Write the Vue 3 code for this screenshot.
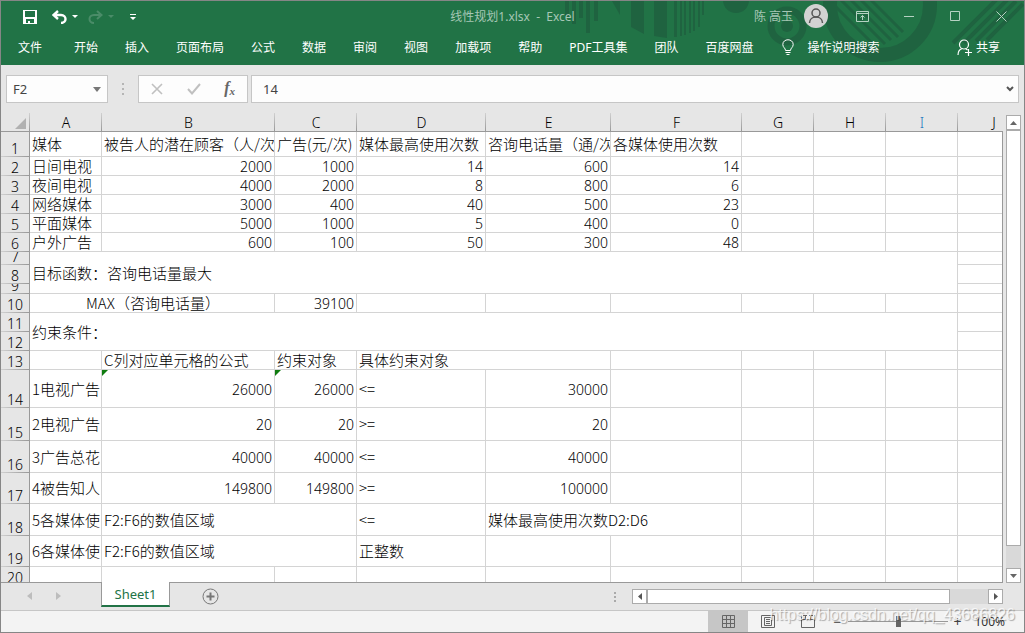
<script setup>
import { ref } from 'vue'

const menus = ['开始', '插入', '页面布局', '公式', '数据', '审阅', '视图', '加载项', '帮助', 'PDF工具集', '团队', '百度网盘']
const columns = [
  ['A', 72], ['B', 173], ['C', 82], ['D', 129], ['E', 125],
  ['F', 131], ['G', 72], ['H', 72], ['I', 72], ['J', 72],
]
const nameBox = ref('F2')
const formula = ref('14')
const zoom = ref(50)

const t = (text, span = 1, rows = 1, align = '') => ({ text, span, rows, align })
const n = (text, flag = false) => ({ text, span: 1, rows: 1, align: 'num', flag })
const blank = (count) => Array.from({ length: count }, () => t(''))

const rows = [
  { h: 25, cells: [t('媒体'), t('被告人的潜在顾客（人/次）'), t('广告(元/次)'), t('媒体最高使用次数'), t('咨询电话量（通/次）'), t('各媒体使用次数'), ...blank(4)] },
  { h: 19, cells: [t('日间电视'), n('2000'), n('1000'), n('14'), n('600'), n('14'), ...blank(4)] },
  { h: 19, cells: [t('夜间电视'), n('4000'), n('2000'), n('8'), n('800'), n('6'), ...blank(4)] },
  { h: 19, cells: [t('网络媒体'), n('3000'), n('400'), n('40'), n('500'), n('23'), ...blank(4)] },
  { h: 19, cells: [t('平面媒体'), n('5000'), n('1000'), n('5'), n('400'), n('0'), ...blank(4)] },
  { h: 19, cells: [t('户外广告'), n('600'), n('100'), n('50'), n('300'), n('48'), ...blank(4)] },
  { h: 13, cells: [t('目标函数：咨询电话量最大', 9, 3), ...blank(1)] },
  { h: 19, cells: blank(1) },
  { h: 10, cells: blank(1) },
  { h: 19, cells: [t('MAX（咨询电话量）', 2, 1, 'mid'), n('39100'), ...blank(7)] },
  { h: 19, cells: [t('约束条件：', 9, 2), ...blank(1)] },
  { h: 19, cells: blank(1) },
  { h: 19, cells: [t(''), t('C列对应单元格的公式'), t('约束对象'), t('具体约束对象', 2), ...blank(5)] },
  { h: 38, cells: [t('1电视广告'), n('26000', true), n('26000', true), t('<='), n('30000'), ...blank(5)] },
  { h: 33, cells: [t('2电视广告'), n('20'), n('20'), t('>='), n('20'), ...blank(5)] },
  { h: 32, cells: [t('3广告总花'), n('40000'), n('40000'), t('<='), n('40000'), ...blank(5)] },
  { h: 31, cells: [t('4被告知人'), n('149800'), n('149800'), t('>='), n('100000'), ...blank(5)] },
  { h: 32, cells: [t('5各媒体使'), t('F2:F6的数值区域', 2), t('<='), t('媒体最高使用次数D2:D6', 2), ...blank(4)] },
  { h: 31, cells: [t('6各媒体使'), t('F2:F6的数值区域', 2), t('正整数'), ...blank(6)] },
  { h: 19, cells: blank(10) },
]

function cellHeight(index, count) {
  return rows.slice(index, index + count).reduce((sum, row) => sum + row.h, 0) - 1
}
</script>

<template>
  <div class="window">
    <header class="ribbon">
      <svg class="art" width="460" height="64" viewBox="565 1 460 64" aria-hidden="true">
        <g fill="#1f6340">
          <path d="M566 1h4v16h-4zM573 1h4v23h-4zM580 1h4v17h-4zM587 1h4v32h-4zM595 1h4v20h-4z" />
          <path d="M613 1h8v14zM632 1h13v33l-13-7zM655 1h13v37l-13-2zM675 1h3v36h-3zM681 1h2v35h-2zM685 1h2v34h-2zM690 1h2v32h-2zM694 1h2v30h-2zM699 1h2v26h-2zM703 1h2v14h-2z" />
          <circle cx="737" cy="0" r="13" />
          <circle cx="788" cy="26" r="6" />
        </g>
        <g fill="none" stroke="#1f6340">
          <circle cx="788" cy="26" r="16" stroke-width="7" />
          <circle cx="881" cy="5" r="50" stroke-width="14" />
          <path d="M833 3l44 44M842 0l44 44M852 0l40 40M862 0l37 37M872 0l32 32" stroke-width="3" />
          <path d="M954 43l44-44M965 43l44-44M977 41l40-40M988 40l36-36" stroke-width="4" />
        </g>
      </svg>
      <div class="titlebar">
        <div class="quick">
          <button aria-label="保存">
            <svg width="14" height="14" viewBox="0 0 14 14"><path d="M0 0h14v14H0zM2 1v6h10V1zM3 9v4h2v-2h2v2h4V9z" fill="#fff" fill-rule="evenodd" /></svg>
          </button>
          <button class="undo" aria-label="撤消">
            <svg width="26" height="14" viewBox="0 0 26 14"><path d="M6 1L1.500 5L6 9M2 5h7c6 0 6 8 0 8" fill="none" stroke="#fff" stroke-width="2.400" /><path d="M20 5h6l-3 3z" fill="#fff" /></svg>
          </button>
          <button class="redo" aria-label="恢复">
            <svg width="26" height="14" viewBox="0 0 26 14"><path d="M9 1l4.500 4L9 9M13 5H6c-6 0-6 8 0 8" fill="none" stroke="#4a8c68" stroke-width="2" /><path d="M20 5h6l-3 3z" fill="#4a8c68" /></svg>
          </button>
          <button class="more" aria-label="自定义快速访问工具栏">
            <svg width="6" height="8" viewBox="0 0 6 8"><path d="M0 1h6v1H0zM0 4h6L3 7z" fill="#fff" /></svg>
          </button>
        </div>
        <div class="title">线性规划1.xlsx&nbsp; -&nbsp; Excel</div>
        <div class="account">
          <span class="user">陈 高玉</span>
          <svg class="avatar" width="24" height="24" viewBox="0 0 24 24"><circle cx="12" cy="12" r="12" fill="#d2d2d2" /><g fill="none" stroke="#555" stroke-width="1.500"><circle cx="12" cy="9" r="4" /><path d="M5.500 19c0-8 13-8 13 0" /></g></svg>
          <button class="win" aria-label="功能区显示选项"><svg width="13" height="11" viewBox="0 0 13 11"><path d="M.5.5h12v10H.5zM.5 2.500h12M6.500 9V4.500M4.500 6.500l2-2 2 2" fill="none" stroke="#b5d2c2" /></svg></button>
          <button class="win" aria-label="最小化"><svg width="11" height="11" viewBox="0 0 11 11"><path d="M0 5.500h10" stroke="#b5d2c2" /></svg></button>
          <button class="win" aria-label="最大化"><svg width="11" height="11" viewBox="0 0 11 11"><path d="M.5.5h9v9h-9z" fill="none" stroke="#b5d2c2" /></svg></button>
          <button class="win" aria-label="关闭"><svg width="11" height="11" viewBox="0 0 11 11"><path d="M.5.5l10 10M10.500.5l-10 10" stroke="#b5d2c2" /></svg></button>
        </div>
      </div>
      <nav class="menu">
        <button class="file">文件</button>
        <button v-for="m in menus" :key="m">{{ m }}</button>
        <button class="tell">
          <svg width="12" height="17" viewBox="0 0 12 17"><path d="M3.500 11.500C3.500 9 .8 8.500.8 5.500c0-6.300 10.400-6.300 10.400 0 0 3-2.700 3.500-2.700 6zM3.500 13.500h5M4.500 15.500h3" fill="none" stroke="#fff" /></svg>
          操作说明搜索
        </button>
        <button class="share">
          <svg width="16" height="17" viewBox="0 0 16 17"><g fill="none" stroke="#fff" stroke-width="1.200"><circle cx="7" cy="5.500" r="4.500" /><path d="M1 16c0-4 2-6 4.500-6.500M8.500 9.500l2 1.500M8 13.500h7M11.500 10v7" /></g></svg>
          共享
        </button>
      </nav>
    </header>

    <div class="formula-bar">
      <div class="namebox">
        <input v-model="nameBox" aria-label="名称框" />
        <button aria-label="名称列表"><svg width="8" height="5" viewBox="0 0 8 5"><path d="M0 0h8L4 5z" fill="#777" /></svg></button>
      </div>
      <svg class="grip" width="2" height="12" viewBox="0 0 2 12"><path d="M0 0h2v2H0zM0 5h2v2H0zM0 10h2v2H0z" fill="#b5b5b5" /></svg>
      <div class="fx-group">
        <button aria-label="取消"><svg width="12" height="12" viewBox="0 0 12 12"><path d="M1 1l10 10M11 1L1 11" stroke="#c0c0c0" stroke-width="1.600" /></svg></button>
        <button aria-label="输入"><svg width="14" height="12" viewBox="0 0 14 12"><path d="M1 6l4 4.500L13 1" fill="none" stroke="#c0c0c0" stroke-width="2" /></svg></button>
        <button class="fx" aria-label="插入函数"><i>f<sub>x</sub></i></button>
      </div>
      <div class="formula">
        <input v-model="formula" aria-label="编辑栏" />
        <button aria-label="展开编辑栏"><svg width="8" height="6" viewBox="0 0 8 6"><path d="M1 1l3 3 3-3" fill="none" stroke="#555" stroke-width="2" /></svg></button>
      </div>
    </div>

    <main class="sheet">
      <div class="grid">
        <table>
          <colgroup>
            <col class="gutter" />
            <col v-for="c in columns" :key="c[0]" :style="{ width: c[1] + 'px' }" />
          </colgroup>
          <thead>
            <tr>
              <th class="corner"><svg width="11" height="11" viewBox="0 0 11 11"><path d="M11 0v11H0z" fill="#b1b1b1" /></svg></th>
              <th v-for="c in columns" :key="c[0]" scope="col" :class="{ blue: c[0] === 'I' }">{{ c[0] }}</th>
            </tr>
          </thead>
          <tbody>
            <tr v-for="(row, r) in rows" :key="r">
              <th scope="row"><div class="rownum" :style="{ height: row.h - 1 + 'px' }"><span>{{ r + 1 }}</span></div></th>
              <td v-for="(cell, c) in row.cells" :key="c" :colspan="cell.span" :rowspan="cell.rows">
                <div class="cell" :class="[cell.align, { flag: cell.flag }]" :style="{ height: cellHeight(r, cell.rows) + 'px' }">{{ cell.text }}</div>
              </td>
            </tr>
          </tbody>
        </table>
      </div>
      <div class="side">
        <button class="sb" aria-label="向上滚动"><svg width="7" height="4" viewBox="0 0 7 4"><path d="M0 4h7L3.500 0z" fill="#666" /></svg></button>
        <div class="vtrack"><div class="vthumb"></div></div>
        <button class="sb" aria-label="向下滚动"><svg width="7" height="4" viewBox="0 0 7 4"><path d="M0 0h7L3.500 4z" fill="#666" /></svg></button>
      </div>
    </main>

    <div class="tabs">
      <div class="tabnav">
        <button aria-label="上一张工作表"><svg width="5" height="8" viewBox="0 0 5 8"><path d="M5 0v8L0 4z" fill="#bdbdbd" /></svg></button>
        <button aria-label="下一张工作表"><svg width="5" height="8" viewBox="0 0 5 8"><path d="M0 0v8l5-4z" fill="#bdbdbd" /></svg></button>
      </div>
      <button class="tab">Sheet1</button>
      <button class="add" aria-label="新工作表"><svg width="17" height="17" viewBox="0 0 17 17"><circle cx="8.500" cy="8.500" r="7.500" fill="none" stroke="#777" /><path d="M4.500 8.500h8M8.500 4.500v8" stroke="#777" stroke-width="2" /></svg></button>
      <div class="hscroll">
        <svg class="grip" width="2" height="10" viewBox="0 0 2 10"><path d="M0 0h2v2H0zM0 4h2v2H0zM0 8h2v2H0z" fill="#aaa" /></svg>
        <button class="sb" aria-label="向左滚动"><svg width="4" height="7" viewBox="0 0 4 7"><path d="M4 0v7L0 3.500z" fill="#555" /></svg></button>
        <div class="htrack"><div class="hthumb"></div></div>
        <button class="sb" aria-label="向右滚动"><svg width="4" height="7" viewBox="0 0 4 7"><path d="M0 0v7l4-3.500z" fill="#555" /></svg></button>
      </div>
    </div>

    <footer class="status">
      <button class="view active" aria-label="普通"><svg width="13" height="13" viewBox="0 0 13 13"><path d="M.5.5h12v12H.5zM4.500.5v12M8.500.5v12M.5 4.500h12M.5 8.500h12" fill="none" stroke="#666" /></svg></button>
      <button class="view" aria-label="页面布局"><svg width="14" height="13" viewBox="0 0 14 13"><path d="M.5.5h13v12H.5zM3.500 2.500h7v8h-7zM5 4.500h4M5 6.500h4M5 8.500h4" fill="none" stroke="#666" /></svg></button>
      <button class="view" aria-label="分页预览"><svg width="14" height="13" viewBox="0 0 14 13"><path d="M.5 0v12.500h13V0M.5 4.500h13M4.500.5v4M9.500.5v4M2 .5h4M8 .5h4" fill="none" stroke="#666" /></svg></button>
      <button class="step" aria-label="缩小">−</button>
      <input v-model="zoom" type="range" min="0" max="100" aria-label="显示比例" />
      <button class="step" aria-label="放大">+</button>
      <span class="percent">100%</span>
    </footer>
    <div class="watermark">https://blog.csdn.net/qq_43686826</div>
  </div>
</template>

<style>
body { margin: 0; overflow: hidden; }
</style>

<style scoped>
* { box-sizing: border-box; }
button, input {
  margin: 0;
  padding: 0;
  border: 0;
  background: none;
  color: inherit;
  font: inherit;
  outline: none;
}
svg { display: block; flex: none; }
.window {
  position: relative;
  display: flex;
  flex-direction: column;
  height: 100vh;
  border: 1px solid #868686;
  background: #e6e6e6;
  color: #000;
  font-family: "Noto Sans", "Noto Sans CJK SC", sans-serif;
  font-size: 12px;
  overflow: hidden;
}
.ribbon { position: relative; flex: none; background: #217346; color: #fff; }
.art { position: absolute; top: 0; right: 0; }
.titlebar {
  position: relative;
  display: grid;
  grid-template-columns: 1fr auto 1fr;
  align-items: center;
  height: 30px;
}
.quick { display: flex; align-items: center; padding: 2px 0 0 22px; }
.undo { margin-left: 15px; }
.redo { margin-left: 10px; }
.more { margin-left: 16px; }
.title { color: #a6c7b5; white-space: nowrap; }
.account { display: flex; align-items: center; justify-content: flex-end; padding-right: 17px; color: #a6c7b5; }
.avatar { margin-left: 11px; }
.win { margin-left: 35px; }
.win:nth-of-type(1) { margin-left: 28px; }
.menu {
  position: relative;
  display: flex;
  align-items: center;
  gap: 27px;
  height: 34px;
  padding: 0 24px 2px 17px;
  white-space: nowrap;
}
.menu .file { margin-right: 5px; }
.tell, .share { display: flex; align-items: center; gap: 13px; }
.tell { margin-left: 2px; }
.share { gap: 3px; margin-left: auto; }
.formula-bar {
  display: flex;
  align-items: center;
  flex: none;
  height: 48px;
  padding: 0 5px;
  color: #444;
}
.namebox, .fx-group, .formula {
  display: flex;
  align-items: center;
  height: 28px;
  border: 1px solid #c6c6c6;
  background: #fdfdfd;
}
.namebox { width: 102px; padding: 0 6px; }
.namebox input, .formula input { flex: 1; min-width: 0; font-size: 13px; }
.formula-bar > .grip { margin: 0 14px; }
.fx-group { width: 110px; padding: 0 12px; justify-content: space-between; }
.fx { font-family: "Liberation Serif", serif; font-size: 16px; font-weight: bold; line-height: 16px; color: #666; }
.fx sub { font-size: 11px; vertical-align: -2px; }
.formula { flex: 1; margin-left: 3px; padding: 0 4px 0 11px; }
.sheet { display: flex; flex: 1; min-height: 0; }
.grid { flex: 1; min-width: 0; overflow: hidden; border-bottom: 1px solid #999; background: #fff; }
table { width: 1029px; table-layout: fixed; border-collapse: separate; border-spacing: 0; }
.gutter { width: 29px; }
th, td { padding: 0; border: 0 solid #d4d4d4; border-width: 0 1px 1px 0; font-weight: normal; }
thead th {
  height: 19px;
  padding-top: 2px;
  border-right: 0;
  border-bottom-color: #999;
  background: linear-gradient(#d0d0d0, #999) right / 1px 100% no-repeat #e6e6e6;
  font-size: 14px;
  font-weight: 300;
  line-height: 16px;
}
.corner svg { margin: 1px 0 0 14px; }
.blue { color: #1f78c0; }
tbody th {
  border-bottom: 0;
  border-right-color: #999;
  background: linear-gradient(90deg, #d0d0d0, #999) bottom / 100% 1px no-repeat #e6e6e6;
}
.rownum {
  display: flex;
  align-items: flex-end;
  justify-content: center;
  margin-bottom: 1px;
  overflow: hidden;
  font-size: 14px;
  font-weight: 300;
  line-height: 14px;
}
.cell {
  position: relative;
  display: flex;
  align-items: center;
  padding: 0 0 0 2px;
  overflow: hidden;
  white-space: nowrap;
  font-family: "Noto Sans CJK SC", sans-serif;
  font-size: 15px;
  font-weight: 300;
  line-height: 18px;
}
.num { justify-content: flex-end; padding: 2px 2px 0 0; font-family: "Noto Sans", sans-serif; font-size: 14px; line-height: 16px; }
.mid { justify-content: center; }
.flag::before {
  content: "";
  position: absolute;
  top: 0;
  left: 0;
  border: 3px solid transparent;
  border-top-color: #107c10;
  border-left-color: #107c10;
}
.side {
  display: flex;
  flex-direction: column;
  width: 22px;
  padding: 2px 3px 0 4px;
  background: linear-gradient(#999, #999) 0 18px / 1px 100% no-repeat;
}
.sb {
  display: flex;
  align-items: center;
  justify-content: center;
  flex: none;
  width: 15px;
  height: 15px;
  border: 1px solid #ababab;
  background: #fff;
}
.vtrack { flex: 1; background: #d9d9d9; }
.vthumb { height: 95%; border: 1px solid #ababab; background: #fff; }
.tabs { display: flex; flex: none; height: 27px; }
.tabnav { display: flex; align-items: center; gap: 24px; width: 100px; padding: 0 0 2px 26px; }
.tab {
  position: relative;
  width: 69px;
  height: 25px;
  margin-top: -1px;
  border: solid #999;
  border-width: 0 1px;
  border-bottom: 2px solid #217346;
  background: #fff;
  color: #217346;
  font-size: 13px;
}
.add { margin-left: 32px; padding-bottom: 1px; }
.hscroll { display: flex; align-items: center; width: 389px; margin: 0 21px 0 auto; }
.hscroll .grip { margin-right: 16px; }
.htrack { flex: 1; height: 15px; background: #d9d9d9; }
.hthumb { width: 89%; height: 15px; border: 1px solid #ababab; background: #fff; }
.status {
  display: flex;
  align-items: center;
  justify-content: flex-end;
  flex: none;
  height: 22px;
  padding-right: 19px;
  border-top: 1px solid #c6c6c6;
  background: #f3f3f3;
  color: #444;
}
.view { display: flex; align-items: center; justify-content: center; width: 40px; height: 21px; }
.active { background: #c6c6c6; }
.step { width: 10px; margin-left: 4px; font-size: 14px; line-height: 20px; }
.status input { appearance: none; width: 100px; height: 20px; margin: 0 0 0 6px; background: linear-gradient(#999, #999) center / 100% 1px no-repeat; }
.status input::-webkit-slider-thumb { appearance: none; width: 5px; height: 11px; background: #666; }
.percent { margin-left: 12px; color: #333; }
.watermark {
  position: absolute;
  right: 9px;
  bottom: 8px;
  color: rgba(255, 255, 255, 0.75);
  font-family: "Liberation Sans", sans-serif;
  font-size: 16px;
  line-height: 18px;
  text-shadow: 1px 1px 1px rgba(0, 0, 0, 0.3);
  pointer-events: none;
}
</style>
